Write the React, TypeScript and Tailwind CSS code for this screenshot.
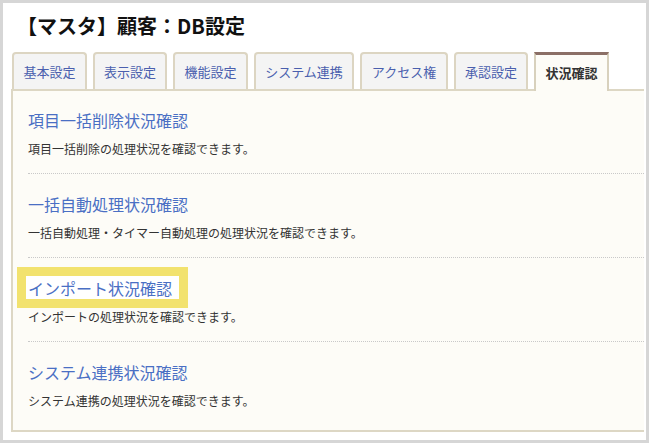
import React from 'react';

const tabs = [
  { label: '基本設定', w: 'w-[75px]' },
  { label: '表示設定', w: 'w-[74px]' },
  { label: '機能設定', w: 'w-[75px]' },
  { label: 'システム連携', w: 'w-[100px]' },
  { label: 'アクセス権', w: 'w-[88px]' },
  { label: '承認設定', w: 'w-[74px]' },
  { label: '状況確認', w: 'w-[75px]', active: true },
];

const items = [
  { title: '項目一括削除状況確認', desc: '項目一括削除の処理状況を確認できます。' },
  { title: '一括自動処理状況確認', desc: '一括自動処理・タイマー自動処理の処理状況を確認できます。' },
  { title: 'インポート状況確認', desc: 'インポートの処理状況を確認できます。', marked: true },
  { title: 'システム連携状況確認', desc: 'システム連携の処理状況を確認できます。' },
];

export default function App() {
  return (
    <div
      className="w-[649px] h-[443px] border-[3px] border-[#d6d6d6] bg-white pl-[8px] pr-[2px] overflow-hidden"
      style={{ fontFamily: '"Noto Sans CJK JP", "Noto Sans", sans-serif' }}
    >
      {/* page title */}
      <div className="h-[49px] pt-[9px] pl-[6px]">
        <h1 className="text-[20px] leading-[28px] font-bold text-[#111]">【マスタ】顧客：DB設定</h1>
      </div>

      {/* tabs */}
      <div className="flex items-end gap-[6px] pl-[1px] h-[39px] relative z-10 -mb-[2px]">
        {tabs.map((t) =>
          t.active ? (
            <div
              key={t.label}
              className={`${t.w} h-[39px] flex items-center justify-center border-x-2 border-[#d8d1bd] border-t-[3px] border-t-[#8b6f66] bg-[#fdfcf7] text-[13px] font-bold text-[#333]`}
            >
              {t.label}
            </div>
          ) : (
            <div
              key={t.label}
              className={`${t.w} h-[37px] mb-[2px] flex items-center justify-center border-x-2 border-t-2 border-[#dcd5c2] rounded-t-[4px] bg-[#f4f4f4] text-[13px] text-[#4a5fae]`}
            >
              {t.label}
            </div>
          )
        )}
      </div>

      {/* panel */}
      <div className="border-t-2 border-l-2 border-b-2 border-[#ddd7c4] bg-[#fdfcf7] h-[343px]">
        {items.map((it, i) => (
          <div
            key={it.title}
            className={`ml-[15px] ${i === 0 ? 'pt-[19px]' : 'pt-[20px]'} ${
              i < items.length - 1 ? 'pb-[16px] border-b border-dotted border-[#c9c9c9]' : ''
            }`}
          >
            <div className="relative w-fit">
              {it.marked && (
                <div className="absolute -left-[11px] -right-[16px] -top-[11px] -bottom-[10px] border-[9px] border-[#f2e26e] bg-white" />
              )}
              <a href="#" className="relative block text-[16px] leading-[20px] text-[#4a6fc4]">
                {it.title}
              </a>
            </div>
            <p className="mt-[11px] text-[12px] leading-[16px] text-[#333]">{it.desc}</p>
          </div>
        ))}
      </div>
    </div>
  );
}
